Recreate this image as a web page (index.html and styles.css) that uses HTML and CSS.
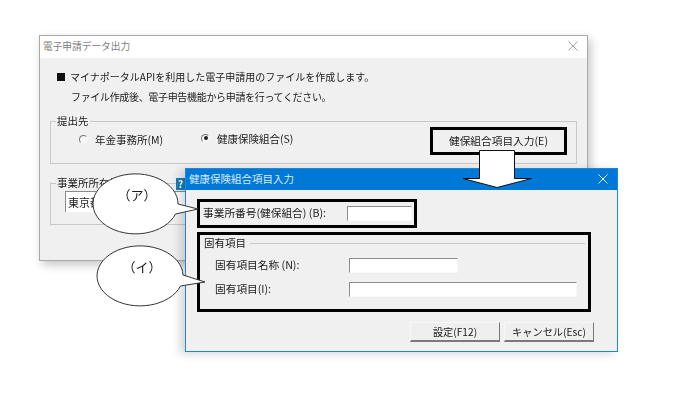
FILE: index.html
```html
<!DOCTYPE html>
<html lang="ja">
<head>
<meta charset="utf-8">
<title>電子申請データ出力</title>
<link rel="stylesheet" href="styles.css">
</head>
<body>
<div class="stage">
  <section class="window window-main">
    <header class="titlebar titlebar-idle">
      <span class="title">電子申請データ出力</span>
      <svg class="close" viewBox="0 0 11 11"><path d="M.5.5l10 10M10.5.5l-10 10"/></svg>
    </header>
    <div class="main-body">
      <p class="note"><span class="square"></span>マイナポータルAPIを利用した電子申請用のファイルを作成します。</p>
      <p class="note note-sub">ファイル作成後、電子申告機能から申請を行ってください。</p>
      <fieldset class="group group-dest">
        <legend>提出先</legend>
        <div class="dest-row">
          <label class="radio radio-a"><span class="dot"></span>年金事務所(M)</label>
          <label class="radio radio-b"><span class="dot dot-on"></span>健康保険組合(S)</label>
          <button class="btn btn-health">健保組合項目入力(E)</button>
        </div>
      </fieldset>
      <fieldset class="group group-addr">
        <legend>事業所所在地(住所)</legend>
        <div class="addr-field">東京都</div>
      </fieldset>
    </div>
  </section>

  <span class="help">?</span>

  <section class="window window-sub">
    <header class="titlebar titlebar-active">
      <span class="title">健康保険組合項目入力</span>
      <svg class="close" viewBox="0 0 11 11"><path d="M.5.5l10 10M10.5.5l-10 10"/></svg>
    </header>
    <div class="sub-body">
      <div class="row-number">
        <span class="label">事業所番号(健保組合) (B):</span>
        <span class="input input-number"></span>
      </div>
      <div class="mark mark-number"></div>
      <fieldset class="group group-own">
        <legend>固有項目</legend>
        <div class="own-rows">
          <div class="row-own">
            <span class="label label-own">固有項目名称 (N):</span>
            <span class="input input-name"></span>
          </div>
          <div class="row-own">
            <span class="label label-own">固有項目(I):</span>
            <span class="input input-item"></span>
          </div>
        </div>
      </fieldset>
      <div class="actions">
        <button class="btn btn-flat">設定(F12)</button>
        <button class="btn btn-flat">キャンセル(Esc)</button>
      </div>
    </div>
  </section>

  <div class="mark mark-own"></div>

  <svg class="arrow" viewBox="0 0 72 40"><path d="M17.500.5h35v28h17L35 37.500 1 28.500h16.500z"/></svg>

  <svg class="callout callout-a" viewBox="0 0 110 64"><path d="M85 31L105 36 82.500 41A42.500 30 0 1 1 85 31z"/></svg>
  <span class="callout-text text-a">（ア）</span>

  <svg class="callout callout-b" viewBox="0 0 114 64"><path d="M86 30L108 37 83.500 41A43 30 0 1 1 86 30z"/></svg>
  <span class="callout-text text-b">（イ）</span>
</div>
</body>
</html>
```
FILE: styles.css
```css
* { box-sizing: border-box; }
html, body { margin: 0; background: #fff; }
body {
  font-family: "Noto Sans CJK JP", "Liberation Sans", sans-serif;
  font-size: 10.500px;
  color: #1a1a1a;
}
.stage { position: relative; width: 687px; height: 401px; overflow: hidden; filter: blur(.3px); }

.window {
  position: absolute;
  display: flex;
  flex-direction: column;
  background: #f0f0f0;
}
.window-main {
  left: 39px; top: 35px; width: 549px; height: 226px;
  border: 1px solid #a9a9a9;
  box-shadow: 3px 4px 9px rgba(0,0,0,.22);
}
.window-sub {
  left: 185px; top: 168px; width: 433px; height: 184px;
  border: 1px solid #1b87dc;
  box-shadow: -5px 2px 9px rgba(0,0,0,.16);
}
.titlebar {
  display: flex;
  align-items: center;
  justify-content: space-between;
  flex: none;
  height: 22px;
  padding: 0 9px 2px 3px;
}
.titlebar-idle { background: #fff; color: #7f7f7f; }
.titlebar-active { background: #0078d7; color: #d8ecfa; height: 21px; }
.title { font-size: 10.500px; }
.titlebar-idle .title { font-size: 9.700px; }
.close { width: 10px; height: 10px; fill: none; stroke-width: 1; }
.titlebar-idle .close { stroke: #9a9a9a; }
.titlebar-active .close { stroke: #fff; }

.main-body { padding: 10px 10px 0; display: flex; flex-direction: column; }
.note { margin: 0; height: 18px; line-height: 18px; padding-left: 7px; display: flex; align-items: center; white-space: nowrap; font-size: 10px; }
.note-sub { padding-left: 21px; margin-top: 2px; letter-spacing: -.33px; }
.square { width: 8px; height: 8px; background: #111; margin-right: 5px; }

.group {
  margin: 0;
  padding: 0;
  border: 1px solid #c8c8c8;
  min-width: 0;
}
.group legend { padding: 0 1px; margin-left: 5px; line-height: 14px; font-size: 10.500px; }
.group-dest { height: 50px; margin-top: 8px; }
.dest-row { display: flex; align-items: flex-start; padding: 0 9px 0 28px; }
.group-addr { height: 49px; margin-top: 12px; }

.radio { display: flex; align-items: center; height: 16px; white-space: nowrap; }
.radio-a { width: 122px; margin-top: 3px; }
.radio-b { margin-top: 2px; }
.dot {
  width: 9px; height: 9px; border-radius: 50%;
  border: 1px solid;
  border-color: #777 #f4f4f4 #f4f4f4 #777;
  background: #f6f6f6; margin-right: 7px;
  display: flex; align-items: center; justify-content: center;
}
.dot-on::after { content: ""; width: 4px; height: 4px; border-radius: 50%; background: #222; }

.btn {
  font: inherit;
  color: inherit;
  background: #eee;
  padding: 0;
  cursor: default;
}
.btn-health {
  margin-left: auto;
  width: 137px; height: 28px;
  margin-top: -1px;
  padding-bottom: 2px;
  border: 3px solid #000;
  background: #f0f0f0;
  font-size: 10.700px;
}
.addr-field {
  width: 120px; height: 21px;
  margin: 1px 0 0 14px;
  padding-left: 2px;
  background: #fff;
  border-top: 1px solid #8a8a8a;
  border-left: 1px solid #8a8a8a;
  line-height: 20px;
  font-size: 11px;
}

.sub-body { position: relative; padding: 0 11px; display: flex; flex-direction: column; flex: 1; }
.row-number { display: flex; align-items: center; justify-content: space-between; height: 15px; margin-top: 16px; width: 215px; padding-left: 6px; }
.label { white-space: nowrap; font-size: 10.700px; margin-bottom: 2px; }
.input {
  display: block;
  height: 15px;
  background: #fff;
  border-top: 1px solid #8c8c8c;
  border-left: 1px solid #8c8c8c;
  border-right: 1px solid #f8f8f8;
  border-bottom: 1px solid #f8f8f8;
}
.input-number { width: 65px; }
.input-name { width: 109px; }
.input-item { width: 228px; }
.mark { border: 3px solid #000; pointer-events: none; }
.mark-number { position: absolute; left: 11px; top: 9px; width: 220px; height: 29px; }
.mark-own { position: absolute; left: 197px; top: 232px; width: 394px; height: 80px; }

.group-own {
  margin-top: 15px;
  width: 383px;
  margin-left: 5px;
  border-width: 1px 0 0 0;
}
.group-own legend { margin-left: 0; padding: 0 4px 0 2px; }
.own-rows { padding: 8px 0 0 13px; }
.row-own { display: flex; align-items: center; height: 15px; margin-bottom: 9px; }
.label-own { width: 134px; flex: none; }

.actions { display: flex; justify-content: flex-end; gap: 4px; margin-top: auto; margin-bottom: 9px; padding-right: 12px; }
.btn-flat {
  width: 90px; height: 20px;
  padding-bottom: 1px;
  background: #efefef;
  border: 1px solid #f8f8f8;
  border-right-color: #7a7a7a;
  border-bottom-color: #7a7a7a;
  border-bottom-width: 2px;
  font-size: 10.200px;
}

.help {
  position: absolute;
  left: 176px; top: 178px;
  width: 9px; height: 12px;
  background: #1a7fb5;
  color: #fff;
  font-weight: 700;
  font-size: 10px;
  line-height: 12px;
  text-align: center;
}
.arrow {
  position: absolute;
  left: 462px; top: 150px;
  width: 72px; height: 40px;
  fill: #fff; stroke: #111; stroke-width: 1;
}
.callout { position: absolute; fill: #fff; stroke: #333; stroke-width: 1; overflow: visible; }
.callout-a { left: 93px; top: 173px; width: 110px; height: 64px; }
.callout-b { left: 97px; top: 245px; width: 114px; height: 64px; }
.callout-text { position: absolute; font-size: 13px; line-height: 16px; width: 40px; text-align: center; white-space: nowrap; }
.text-a { left: 117px; top: 187px; }
.text-b { left: 122px; top: 259px; }
```
